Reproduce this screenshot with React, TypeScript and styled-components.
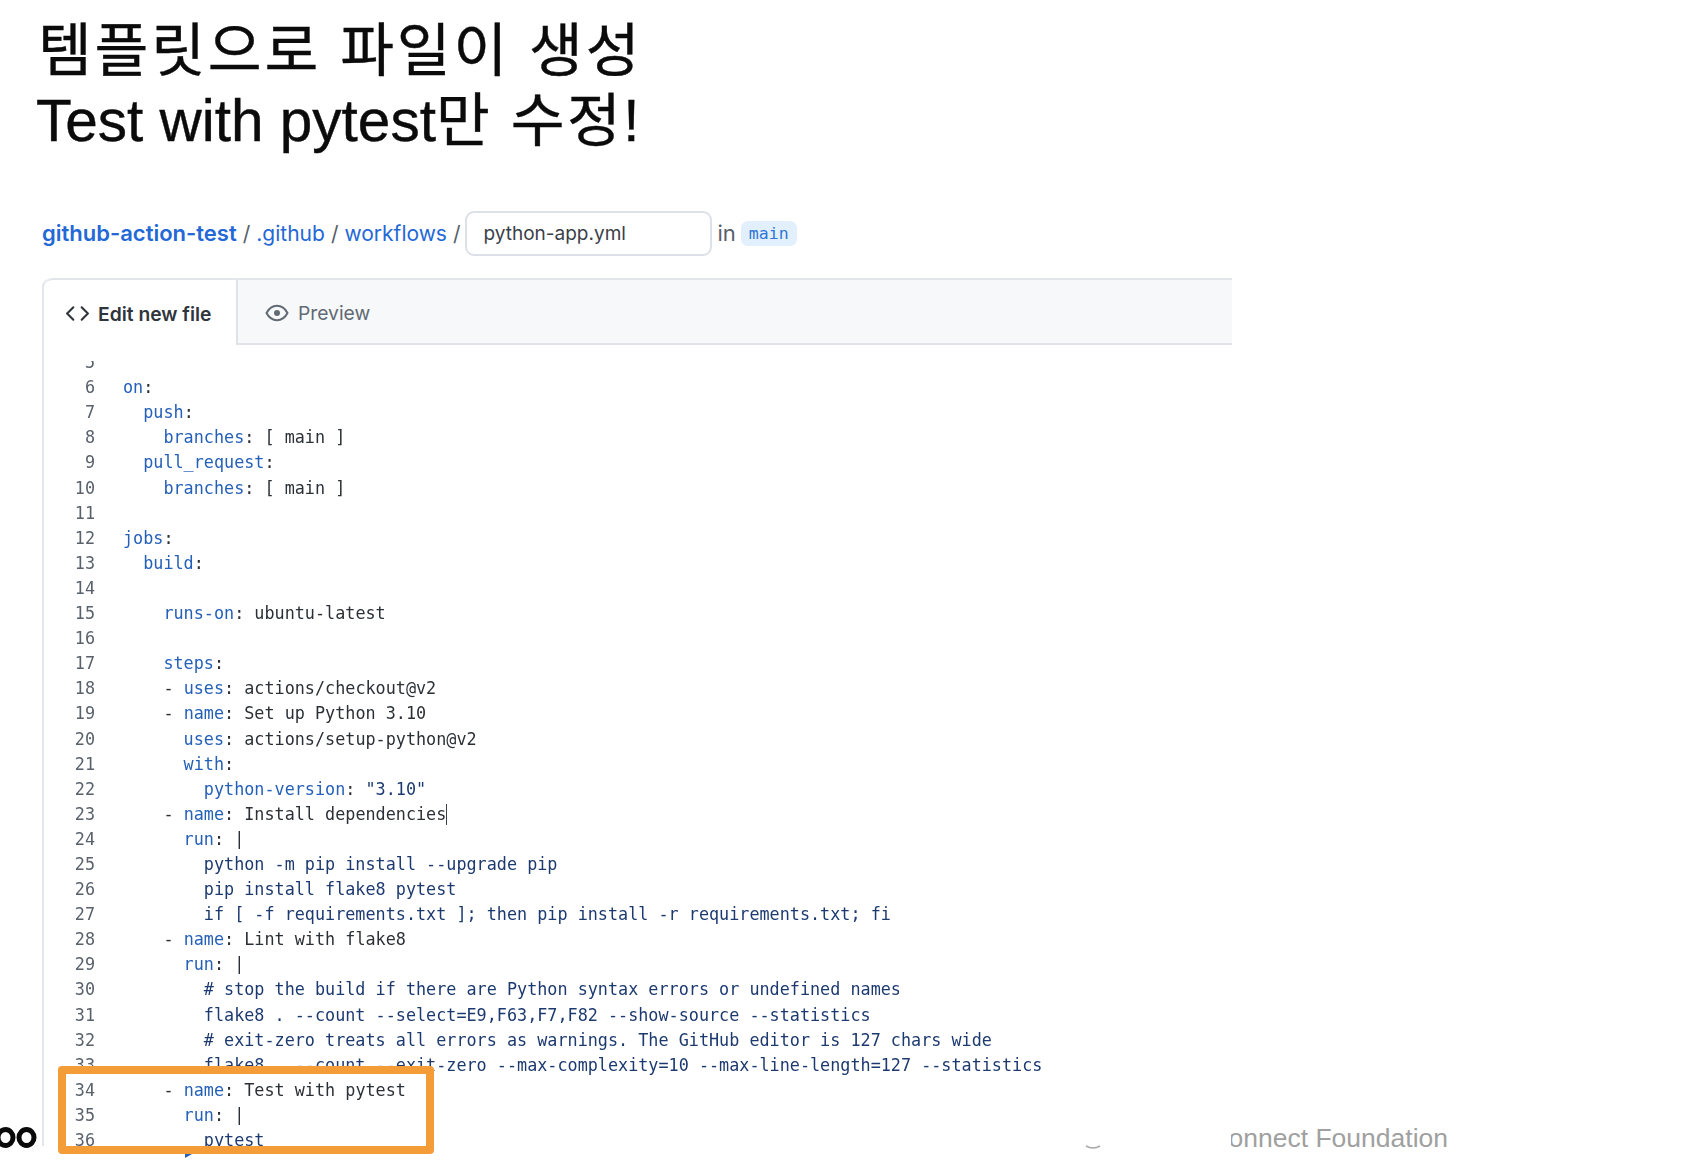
import React from "react";
import styled, { createGlobalStyle } from "styled-components";
import { Code } from "lucide-react";

const GlobalStyle = createGlobalStyle`
  html, body {
    margin: 0;
    padding: 0;
    background: #fff;
  }
`;

const Slide = styled.div`
  position: relative;
  width: 1694px;
  height: 1170px;
  overflow: hidden;
  background: #fff;
  font-family: "Inter", "Liberation Sans", sans-serif;
`;

const Title = styled.h1`
  margin: 0;
  padding: 16px 0 0 36px;
  font-family: "Liberation Sans", "Noto Sans CJK KR", sans-serif;
  font-size: 58.5px;
  font-weight: 400;
  line-height: 70px;
  color: #0b0b0b;
  -webkit-text-stroke: 0.4px #0b0b0b;
`;

const Hangul = styled.span<{ $lead?: boolean }>`
  margin-left: ${(p) => (p.$lead ? 2 : 0)}px;
  letter-spacing: ${(p) => (p.$lead ? 2.8 : 2.4)}px;
`;

const Breadcrumb = styled.div`
  display: flex;
  align-items: center;
  gap: 6px;
  height: 46px;
  margin: 54px 0 0 42px;
  font-size: 21px;
  color: #57606a;
`;

const PathLink = styled.a<{ $strong?: boolean }>`
  color: #2468d6;
  font-size: ${(p) => (p.$strong ? 22 : 21)}px;
  font-weight: ${(p) => (p.$strong ? 600 : 400)};
  text-decoration: none;
`;

const FileName = styled.div`
  display: flex;
  align-items: center;
  box-sizing: border-box;
  width: 247px;
  height: 45px;
  margin-left: -2px;
  padding-left: 17px;
  border: 2px solid #dde1e7;
  border-radius: 9px;
  color: #3a4048;
  font-size: 19px;
`;

const BranchWord = styled.span`
  font-size: 22px;
`;

const BranchChip = styled.span`
  display: inline-flex;
  align-items: center;
  height: 25px;
  margin-left: -1px;
  padding: 0 8px;
  border-radius: 7px;
  background: #e2f0fd;
  color: #2f74d6;
  font-family: "DejaVu Sans Mono", monospace;
  font-size: 16.5px;
`;

const Editor = styled.section`
  box-sizing: border-box;
  width: 1190px;
  height: 868px;
  margin: 22px 0 0 42px;
  border-left: 2px solid #e2e5ea;
  border-top-left-radius: 9px;
  background: #fff;
`;

const TabBar = styled.div`
  display: flex;
  height: 67px;
`;

const Tab = styled.div<{ $active?: boolean }>`
  display: flex;
  align-items: center;
  box-sizing: border-box;
  width: ${(p) => (p.$active ? "194px" : "auto")};
  flex: ${(p) => (p.$active ? "none" : 1)};
  gap: ${(p) => (p.$active ? 8 : 9)}px;
  padding-left: ${(p) => (p.$active ? 21 : 27)}px;
  padding-top: 2px;
  border-top: 2px solid #e2e5ea;
  border-right: ${(p) => (p.$active ? "2px solid #dfe3e8" : "none")};
  border-bottom: ${(p) => (p.$active ? "none" : "2px solid #e0e3e9")};
  border-top-left-radius: ${(p) => (p.$active ? 9 : 0)}px;
  background: ${(p) => (p.$active ? "#fff" : "#f6f8fa")};
  color: ${(p) => (p.$active ? "#2f353c" : "#626a73")};
  font-size: 19.3px;
  font-weight: ${(p) => (p.$active ? 600 : 400)};
`;

const CodeViewport = styled.div`
  height: 785px;
  margin-top: 16px;
  overflow: hidden;
  filter: blur(0.35px);
`;

const CodeScroll = styled.div`
  margin-top: -10.9px;
`;

const Row = styled.div`
  display: flex;
  height: 25.1px;
  line-height: 25.1px;
  font-family: "DejaVu Sans Mono", monospace;
  font-size: 16.8px;
  white-space: pre;
`;

const LineNumber = styled.span`
  box-sizing: border-box;
  width: 51px;
  margin-right: 28px;
  text-align: right;
  color: #59616b;
`;

const Token = styled.span<{ $kind: "k" | "p" | "s" }>`
  color: ${(p) => (p.$kind === "k" ? "#2560b8" : p.$kind === "s" ? "#1d3a70" : "#2b3036")};
`;

const Caret = styled.span`
  display: inline-block;
  width: 1px;
  height: 21px;
  vertical-align: -5px;
  background: #3a4048;
`;

const Highlight = styled.div`
  position: absolute;
  z-index: 2;
  left: 58px;
  top: 1066px;
  box-sizing: border-box;
  width: 376px;
  height: 88px;
  border: 8px solid #f49c37;
  border-radius: 4px;
`;

const BlueSpeck = styled.div`
  position: absolute;
  left: 185px;
  top: 1154px;
  width: 7px;
  height: 4px;
  background: #2560b8;
  clip-path: polygon(0 0, 100% 0, 0 100%);
`;

const FooterLogo = styled.svg`
  position: absolute;
  left: 0;
  top: 1125px;
`;

const FooterArc = styled.svg`
  position: absolute;
  left: 1084px;
  top: 1144px;
`;

const FooterText = styled.div`
  position: absolute;
  left: 1231px;
  right: 246px;
  top: 1122px;
  display: flex;
  justify-content: flex-end;
  overflow: hidden;
  font-family: "Liberation Sans", sans-serif;
  font-size: 26.5px;
  line-height: 32px;
  color: #a0a0a0;
  white-space: nowrap;
`;

type Seg = [string, "k" | "p" | "s"];

const K = (t: string): Seg => [t, "k"];
const P = (t: string): Seg => [t, "p"];
const S = (t: string): Seg => [t, "s"];

const lines: Seg[][] = [
  [P("")],
  [K("on"), P(":")],
  [K("  push"), P(":")],
  [K("    branches"), P(": [ main ]")],
  [K("  pull_request"), P(":")],
  [K("    branches"), P(": [ main ]")],
  [],
  [K("jobs"), P(":")],
  [K("  build"), P(":")],
  [],
  [K("    runs-on"), P(": ubuntu-latest")],
  [],
  [K("    steps"), P(":")],
  [P("    - "), K("uses"), P(": actions/checkout@v2")],
  [P("    - "), K("name"), P(": Set up Python 3.10")],
  [K("      uses"), P(": actions/setup-python@v2")],
  [K("      with"), P(":")],
  [K("        python-version"), P(": "), S('"3.10"')],
  [P("    - "), K("name"), P(": Install dependencies")],
  [K("      run"), P(": |")],
  [S("        python -m pip install --upgrade pip")],
  [S("        pip install flake8 pytest")],
  [S("        if [ -f requirements.txt ]; then pip install -r requirements.txt; fi")],
  [P("    - "), K("name"), P(": Lint with flake8")],
  [K("      run"), P(": |")],
  [S("        # stop the build if there are Python syntax errors or undefined names")],
  [S("        flake8 . --count --select=E9,F63,F7,F82 --show-source --statistics")],
  [S("        # exit-zero treats all errors as warnings. The GitHub editor is 127 chars wide")],
  [S("        flake8 . --count --exit-zero --max-complexity=10 --max-line-length=127 --statistics")],
  [P("    - "), K("name"), P(": Test with pytest")],
  [K("      run"), P(": |")],
  [S("        pytest")],
];

function EyeIcon() {
  return (
    <svg width="24" height="24" viewBox="0 0 24 24">
      <path
        d="M1.5 12C4 7.2 7.8 4.8 12 4.8s8 2.4 10.5 7.2c-2.5 4.8-6.3 7.2-10.5 7.2S4 16.8 1.5 12z"
        fill="none"
        stroke="currentColor"
        strokeWidth="2"
        strokeLinejoin="round"
      />
      <circle cx="12" cy="12" r="3" fill="currentColor" />
    </svg>
  );
}

export default function App() {
  return (
    <Slide>
      <GlobalStyle />

      <Title>
        <Hangul $lead>템플릿으로 파일이 생성</Hangul>
        <br />
        Test with pytest<Hangul>만 수정</Hangul>!
      </Title>

      <Breadcrumb>
        <PathLink $strong>github-action-test</PathLink>
        <span>/</span>
        <PathLink>.github</PathLink>
        <span>/</span>
        <PathLink>workflows</PathLink>
        <span>/</span>
        <FileName>python-app.yml</FileName>
        <BranchWord>in</BranchWord>
        <BranchChip>main</BranchChip>
      </Breadcrumb>

      <Editor>
        <TabBar>
          <Tab $active>
            <Code size={25} strokeWidth={2} />
            Edit new file
          </Tab>
          <Tab>
            <EyeIcon />
            Preview
          </Tab>
        </TabBar>
        <CodeViewport>
          <CodeScroll>
            {lines.map((segs, i) => (
              <Row key={i}>
                <LineNumber>{i + 5}</LineNumber>
                <span>
                  {segs.map(([text, kind], j) => (
                    <Token key={j} $kind={kind}>
                      {text}
                    </Token>
                  ))}
                  {i + 5 === 23 && <Caret />}
                </span>
              </Row>
            ))}
          </CodeScroll>
        </CodeViewport>
      </Editor>

      <Highlight />
      <BlueSpeck />

      <FooterLogo width="38" height="26" viewBox="0 0 38 26">
        <ellipse cx="5.5" cy="12.5" rx="7.5" ry="8" fill="none" stroke="#0a0a0a" strokeWidth="5" />
        <ellipse cx="26.5" cy="12.5" rx="7.5" ry="8" fill="none" stroke="#0a0a0a" strokeWidth="5" />
      </FooterLogo>

      <FooterArc width="20" height="8" viewBox="0 0 20 8">
        <path d="M2 2 Q9 6 16 2" fill="none" stroke="#a8a8a8" strokeWidth="1.5" />
      </FooterArc>

      <FooterText>Connect Foundation</FooterText>
    </Slide>
  );
}
